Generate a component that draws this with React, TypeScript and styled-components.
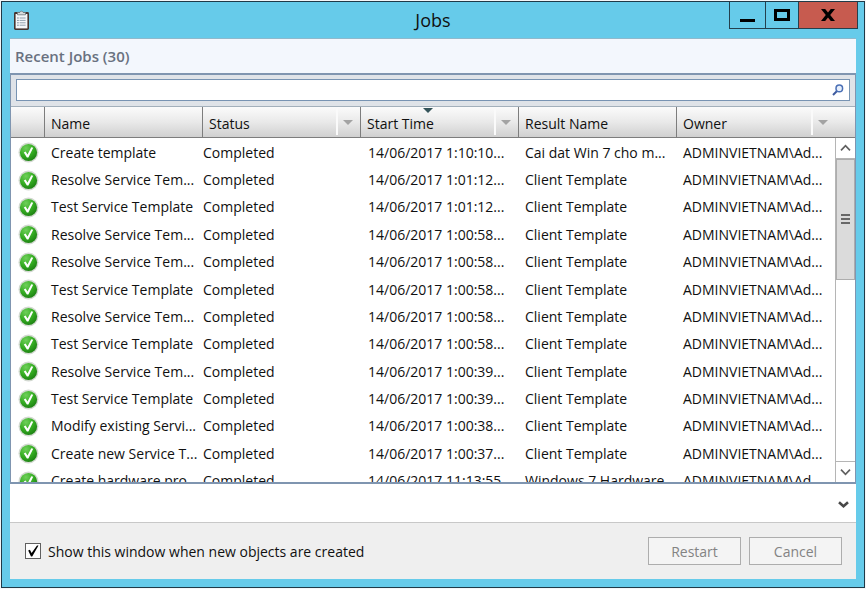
import React from "react";
import styled, { createGlobalStyle } from "styled-components";

const GlobalStyle = createGlobalStyle`
  * { box-sizing: border-box; }
  body { margin: 0; background: #f4f6f8; }
  body, button, input {
    font-family: "Open Sans", "Noto Sans", sans-serif;
    font-size: 14px;
    color: #101010;
  }
  button { padding: 0; border: 0; background: none; }
`;

const Desktop = styled.div`
  height: 100vh;
  min-height: 320px;
  padding: 1px;
  display: flex;
`;

const Window = styled.main`
  flex: 1;
  min-width: 0;
  display: flex;
  flex-direction: column;
  border: 1px solid #1f3a48;
  background: #66cbea;
`;

const TitleBar = styled.header`
  flex: none;
  height: 36px;
  padding: 0 6px;
  display: grid;
  grid-template-columns: 1fr auto 1fr;
  align-items: center;
`;

const TitleIcon = styled.svg`
  display: block;
  margin: 0 0 0 5px;
`;

const Title = styled.h1`
  margin: 0;
  font-size: 18px;
  line-height: 36px;
  font-weight: 400;
`;

const Caption = styled.div`
  align-self: start;
  justify-self: end;
  display: flex;
  height: 27px;
`;

const CaptionButton = styled.button<{ $width: number; $danger?: boolean }>`
  width: ${(p) => p.$width}px;
  display: grid;
  place-items: center;
  border: solid #24404d;
  border-width: 0 1px 1px 0;
  background: ${(p) => (p.$danger ? "#c75b4f" : "transparent")};
  &:first-child { border-left-width: 1px; }
`;

const Content = styled.div`
  flex: 1;
  min-height: 0;
  margin: 0 8px 8px;
  display: flex;
  flex-direction: column;
  background: #efefef;
`;

const SectionTitle = styled.h2`
  flex: none;
  margin: 0;
  height: 35px;
  padding-left: 5px;
  border-top: 1px solid #8fb9cc;
  background: #f3f7fd;
  color: #697180;
  font-size: 15px;
  line-height: 34px;
  font-weight: 600;
`;

const JobsPanel = styled.section`
  flex: 1;
  min-height: 0;
  display: flex;
  flex-direction: column;
  border: solid #7f95b0;
  border-width: 2px 1px;
  background: #fff;
`;

const SearchBar = styled.div`
  flex: none;
  height: 32px;
  padding: 4px 5px 5px 5px;
  background: #dfe3e8;
  border-bottom: 1px solid #a3b0bb;
`;

const SearchField = styled.label`
  height: 100%;
  display: flex;
  align-items: center;
  border: 1px solid #7894b3;
  background: #fff;
  padding-right: 5px;
`;

const SearchInput = styled.input`
  flex: 1;
  min-width: 0;
  border: 0;
  outline: 0;
  height: 18px;
  background: transparent;
`;

const ListArea = styled.div`
  flex: 1;
  min-height: 0;
  overflow: hidden;
  display: grid;
  grid-template: 31px minmax(0, 1fr) / minmax(0, 1fr) 20px;
`;

const JobTable = styled.table`
  grid-area: 1 / 1 / 3 / 3;
  width: 100%;
  height: 387px;
  table-layout: fixed;
  border-collapse: separate;
  border-spacing: 0;
`;

const Column = styled.col<{ $width?: number }>`
  width: ${(p) => (p.$width ? `${p.$width}px` : "auto")};
`;

const HeadCell = styled.th`
  position: relative;
  height: 31px;
  padding: 0;
  border: solid #7d7d7d;
  border-width: 0 1px 1px 0;
  background: linear-gradient(#fbfbfb, #e9e9e9 50%, #d0d0d0);
  text-align: left;
  font-weight: 400;
  &:last-child { border-right: 0; }
`;

const HeadContent = styled.div<{ $scrollGap?: boolean }>`
  height: 30px;
  display: flex;
  align-items: center;
  padding-left: 6px;
  padding-right: ${(p) => (p.$scrollGap ? 20 : 0)}px;
`;

const HeadLabel = styled.span`
  flex: 1;
  padding-top: 3px;
  white-space: nowrap;
`;

const FilterButton = styled.button`
  width: 24px;
  height: 26px;
  padding-right: 2px;
  display: grid;
  place-items: center;
  border-left: 2px solid #fafafa;
`;

const SortMark = styled.svg`
  position: absolute;
  top: 1px;
  left: calc(50% - 17px);
`;

const Cell = styled.td<{ $inset: number }>`
  padding: 2px 0 0 ${(p) => p.$inset}px;
  overflow: hidden;
  white-space: nowrap;
  line-height: 20px;
  vertical-align: middle;
`;

const StatusIcon = styled.svg`
  display: block;
`;

const ScrollBar = styled.div`
  grid-area: 2 / 2;
  display: flex;
  flex-direction: column;
  border-left: 1px solid #b5b5b5;
  background: #fff;
`;

const ScrollButton = styled.button<{ $end?: boolean }>`
  flex: none;
  height: 21px;
  display: grid;
  place-items: center;
  background: #fff;
  border-bottom: ${(p) => (p.$end ? "0" : "1px solid #b5b5b5")};
  border-top: ${(p) => (p.$end ? "1px solid #b5b5b5" : "0")};
`;

const ScrollTrack = styled.div`
  flex: 1;
  min-height: 0;
`;

const ScrollThumb = styled.div`
  height: 40%;
  display: grid;
  place-items: center;
  border: 1px solid #adadad;
  background: #dbdbdb;
`;

const DetailsBar = styled.div`
  flex: none;
  height: 39px;
  display: flex;
  align-items: center;
  justify-content: flex-end;
  padding-right: 7px;
  border-bottom: 1px solid #c8c8c8;
  background: #fff;
`;

const IconButton = styled.button`
  display: block;
`;

const Footer = styled.footer`
  flex: none;
  height: 56px;
  display: flex;
  align-items: center;
  gap: 8px;
  padding: 0 14px 0 15px;
`;

const CheckLabel = styled.label`
  flex: 1;
  display: flex;
  align-items: center;
  gap: 7px;
`;

const CheckBox = styled.input`
  appearance: none;
  margin: 0;
  width: 16px;
  height: 16px;
  border: 1px solid #606060;
  background: #fff;
  &:checked {
    background: #fff url("data:image/svg+xml,%3Csvg xmlns='http://www.w3.org/2000/svg' viewBox='0 0 14 14'%3E%3Cpath d='M2.2 6.6 3.9 5.8 5.6 9 11 1.5h1.5L6.2 12.4H5z' fill='%23000'/%3E%3C/svg%3E") center / 14px 14px no-repeat;
  }
`;

const ActionButton = styled.button`
  width: 93px;
  height: 28px;
  border: 1px solid #adadad;
  background: #f4f4f4;
  &:disabled { color: #838383; }
`;

type Job = [name: string, start: string, result: string];

const jobs: Job[] = [
  ["Create template", "14/06/2017 1:10:10...", "Cai dat Win 7 cho m..."],
  ["Resolve Service Tem...", "14/06/2017 1:01:12...", "Client Template"],
  ["Test Service Template", "14/06/2017 1:01:12...", "Client Template"],
  ["Resolve Service Tem...", "14/06/2017 1:00:58...", "Client Template"],
  ["Resolve Service Tem...", "14/06/2017 1:00:58...", "Client Template"],
  ["Test Service Template", "14/06/2017 1:00:58...", "Client Template"],
  ["Resolve Service Tem...", "14/06/2017 1:00:58...", "Client Template"],
  ["Test Service Template", "14/06/2017 1:00:58...", "Client Template"],
  ["Resolve Service Tem...", "14/06/2017 1:00:39...", "Client Template"],
  ["Test Service Template", "14/06/2017 1:00:39...", "Client Template"],
  ["Modify existing Servi...", "14/06/2017 1:00:38...", "Client Template"],
  ["Create new Service T...", "14/06/2017 1:00:37...", "Client Template"],
  ["Create hardware pro...", "14/06/2017 11:13:55...", "Windows 7 Hardware..."],
];

const columns = [
  { label: "Name" },
  { label: "Status", filter: true },
  { label: "Start Time", filter: true, sorted: true },
  { label: "Result Name" },
  { label: "Owner", filter: true, last: true },
];

function Completed() {
  return (
    <StatusIcon width="21" height="21" viewBox="0 0 21 21" role="img" aria-label="Success">
      <defs>
        <radialGradient id="ball" cx="0.35" cy="0.25" r="0.8">
          <stop offset="0" stopColor="#6fd05a" />
          <stop offset="0.55" stopColor="#35ad22" />
          <stop offset="1" stopColor="#1c7f12" />
        </radialGradient>
      </defs>
      <circle cx="10.5" cy="10.5" r="10" fill="#d3d9d1" />
      <circle cx="10.5" cy="10.5" r="8.6" fill="url(#ball)" />
      <path d="M5.8 10.6 7.6 9.5 9.5 12.4 13.3 5.2 15.2 5.8 10.4 15.6H8.9z" fill="#fff" />
    </StatusIcon>
  );
}

function Chevron({ up }: { up?: boolean }) {
  return (
    <svg width="11" height="8" viewBox="0 0 11 8" aria-hidden="true">
      <path
        d={up ? "M1 6.3 5.5 1.7 10 6.3" : "M1 1.7 5.5 6.3 10 1.7"}
        fill="none"
        stroke="#606060"
        strokeWidth="1.7"
      />
    </svg>
  );
}

export default function App() {
  return (
    <>
      <GlobalStyle />
      <Desktop>
        <Window>
          <TitleBar>
            <TitleIcon width="17" height="21" viewBox="0 0 17 21" aria-hidden="true">
              <rect x="1" y="2" width="15" height="18" rx="1.4" fill="#46342f" />
              <rect x="2.6" y="4" width="11.8" height="14.4" fill="#f5f7f9" />
              <path d="M4.5 4.8V2.4h2.3a1.8 1.8 0 0 1 3.4 0h2.3v2.4z" fill="#d9dcdd" stroke="#697579" strokeWidth=".8" />
              <path d="M4.3 8h1.3M4.3 10.4h1.3M4.3 12.8h1.3M4.3 15.2h1.3" stroke="#55677d" strokeWidth="1" />
              <path d="M6.6 8h6M6.6 10.4h6M6.6 12.8h6M6.6 15.2h6" stroke="#93a0ae" strokeWidth="1" />
            </TitleIcon>
            <Title>Jobs</Title>
            <Caption>
              <CaptionButton $width={37} aria-label="Minimize">
                <svg width="15" height="15" viewBox="0 0 15 15"><path d="M0 11h15v3H0z" /></svg>
              </CaptionButton>
              <CaptionButton $width={33} aria-label="Maximize">
                <svg width="16" height="12" viewBox="0 0 16 12"><path d="M1.5 1.5h13v9h-13z" fill="none" stroke="#000" strokeWidth="3" /></svg>
              </CaptionButton>
              <CaptionButton $width={59} $danger aria-label="Close">
                <svg width="14" height="12" viewBox="0 0 14 12"><path d="M0 0h4.2L7 3.6 9.8 0H14L9.2 6 14 12H9.8L7 8.4 4.2 12H0l4.8-6z" /></svg>
              </CaptionButton>
            </Caption>
          </TitleBar>
          <Content>
            <SectionTitle>Recent Jobs (30)</SectionTitle>
            <JobsPanel>
              <SearchBar>
                <SearchField>
                  <SearchInput type="text" aria-label="Search jobs" />
                  <svg width="12" height="12" viewBox="0 0 12 12" aria-hidden="true">
                    <path d="M5 7 1 11" stroke="#3d5a9e" strokeWidth="2" />
                    <circle cx="7.3" cy="4.4" r="3.3" fill="#e6effc" stroke="#4a6fb5" strokeWidth="1.5" />
                  </svg>
                </SearchField>
              </SearchBar>
              <ListArea>
                <JobTable>
                  <colgroup>
                    <Column $width={34} />
                    <Column $width={158} />
                    <Column $width={158} />
                    <Column $width={158} />
                    <Column $width={158} />
                    <Column />
                  </colgroup>
                  <thead>
                    <tr>
                      <HeadCell scope="col" aria-label="State" />
                      {columns.map((c) => (
                        <HeadCell key={c.label} scope="col" aria-sort={c.sorted ? "descending" : undefined}>
                          {c.sorted && (
                            <SortMark width="10" height="5" viewBox="0 0 10 5" aria-hidden="true">
                              <path d="M0 0h10L5 5z" fill="#35545a" />
                            </SortMark>
                          )}
                          <HeadContent $scrollGap={c.last}>
                            <HeadLabel>{c.label}</HeadLabel>
                            {c.filter && (
                              <FilterButton aria-label={`Filter ${c.label}`}>
                                <svg width="10" height="5" viewBox="0 0 10 5"><path d="M0 0h10L5 5z" fill="#a3a3a3" /></svg>
                              </FilterButton>
                            )}
                          </HeadContent>
                        </HeadCell>
                      ))}
                    </tr>
                  </thead>
                  <tbody>
                    {jobs.map(([name, start, result], i) => (
                      <tr key={i}>
                        <Cell $inset={7}><Completed /></Cell>
                        <Cell $inset={6}>{name}</Cell>
                        <Cell $inset={0}>Completed</Cell>
                        <Cell $inset={7}>{start}</Cell>
                        <Cell $inset={6}>{result}</Cell>
                        <Cell $inset={6}>ADMINVIETNAM\Ad...</Cell>
                      </tr>
                    ))}
                  </tbody>
                </JobTable>
                <ScrollBar>
                  <ScrollButton aria-label="Scroll up"><Chevron up /></ScrollButton>
                  <ScrollTrack>
                    <ScrollThumb>
                      <svg width="9" height="10" viewBox="0 0 9 10" aria-hidden="true">
                        <path d="M0 1h9M0 5h9M0 9h9" stroke="#686868" strokeWidth="2" />
                      </svg>
                    </ScrollThumb>
                  </ScrollTrack>
                  <ScrollButton $end aria-label="Scroll down"><Chevron /></ScrollButton>
                </ScrollBar>
              </ListArea>
            </JobsPanel>
            <DetailsBar>
              <IconButton aria-label="Show details">
                <svg width="11" height="8" viewBox="0 0 11 8"><path d="M1 1.3 5.5 5.3 10 1.3" fill="none" stroke="#484848" strokeWidth="2.6" /></svg>
              </IconButton>
            </DetailsBar>
            <Footer>
              <CheckLabel>
                <CheckBox type="checkbox" defaultChecked />
                Show this window when new objects are created
              </CheckLabel>
              <ActionButton disabled>Restart</ActionButton>
              <ActionButton disabled>Cancel</ActionButton>
            </Footer>
          </Content>
        </Window>
      </Desktop>
    </>
  );
}
